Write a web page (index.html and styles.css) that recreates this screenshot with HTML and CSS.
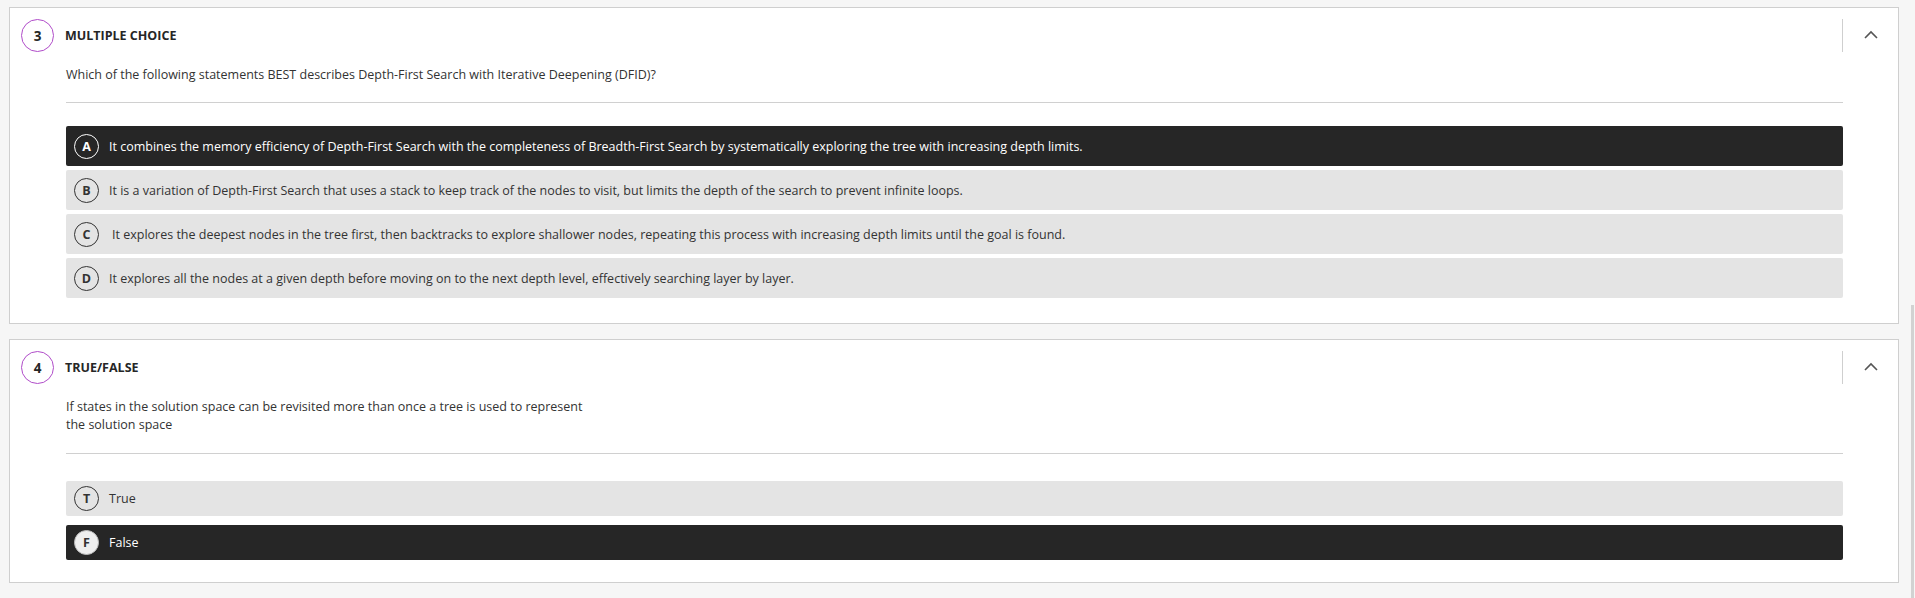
FILE: index.html
```html
<!DOCTYPE html>
<html>
<head>
<meta charset="utf-8">
<link rel="stylesheet" href="styles.css">
</head>
<body>
<div class="page">
  <section class="card card-mc">
    <div class="card-head">
      <div class="qnum">3</div>
      <div class="qtitle">MULTIPLE CHOICE</div>
      <div class="vdiv"></div>
      <div class="chev">
        <svg width="14" height="9" viewBox="0 0 14 9"><polyline points="1,8 7,2 13,8" fill="none" stroke="#555" stroke-width="1.6"/></svg>
      </div>
    </div>
    <div class="card-body">
      <p class="qtext">Which of the following statements BEST describes Depth-First Search with Iterative Deepening (DFID)?</p>
      <hr class="sep">
      <div class="options">
        <div class="opt opt-selected"><span class="letter">A</span><span class="otext">It combines the memory efficiency of Depth-First Search with the completeness of Breadth-First Search by systematically exploring the tree with increasing depth limits.</span></div>
        <div class="opt"><span class="letter">B</span><span class="otext">It is a variation of Depth-First Search that uses a stack to keep track of the nodes to visit, but limits the depth of the search to prevent infinite loops.</span></div>
        <div class="opt"><span class="letter">C</span><span class="otext otext-c">It explores the deepest nodes in the tree first, then backtracks to explore shallower nodes, repeating this process with increasing depth limits until the goal is found.</span></div>
        <div class="opt"><span class="letter">D</span><span class="otext">It explores all the nodes at a given depth before moving on to the next depth level, effectively searching layer by layer.</span></div>
      </div>
    </div>
  </section>

  <section class="card card-tf">
    <div class="card-head">
      <div class="qnum">4</div>
      <div class="qtitle">TRUE/FALSE</div>
      <div class="vdiv"></div>
      <div class="chev">
        <svg width="14" height="9" viewBox="0 0 14 9"><polyline points="1,8 7,2 13,8" fill="none" stroke="#555" stroke-width="1.6"/></svg>
      </div>
    </div>
    <div class="card-body">
      <p class="qtext">If states in the solution space can be revisited more than once a tree is used to represent<br>the solution space</p>
      <hr class="sep">
      <div class="options options-tf">
        <div class="opt opt-tf"><span class="letter">T</span><span class="otext">True</span></div>
        <div class="opt opt-tf opt-selected"><span class="letter letter-filled">F</span><span class="otext">False</span></div>
      </div>
    </div>
  </section>
</div>
<div class="scrollthumb"></div>
</body>
</html>
```

FILE: styles.css
```css
html, body {
  margin: 0;
  padding: 0;
}
body {
  background: #f6f6f6;
  font-family: "Open Sans", "Liberation Sans", sans-serif;
  color: #262626;
  height: 598px;
  overflow: hidden;
}
.page {
  padding: 7px 16px 0 9px;
  display: flex;
  flex-direction: column;
  gap: 15px;
}
.card {
  background: #fff;
  border: 1px solid #cfcfcf;
  padding-top: 11px;
}
.card-mc { padding-bottom: 25px; }
.card-tf { padding-bottom: 22px; }
.card-head {
  display: flex;
  align-items: center;
  height: 33px;
  padding-left: 11px;
}
.qnum {
  width: 31px;
  height: 31px;
  border: 1.5px solid #b04cc9;
  border-radius: 50%;
  display: flex;
  align-items: center;
  justify-content: center;
  font-weight: 700;
  font-size: 13.5px;
  color: #262626;
}
.qtitle {
  flex: 1;
  margin-left: 11px;
  font-weight: 700;
  font-size: 12.5px;
  color: #262626;
}
.vdiv {
  width: 1px;
  height: 33px;
  background: #cfcfcf;
}
.chev {
  width: 55px;
  display: flex;
  justify-content: center;
  align-items: center;
  height: 33px;
  padding-bottom: 2px;
  box-sizing: border-box;
}
.card-body {
  padding: 0 55px 0 56px;
}
.qtext {
  margin: 14px 0 0 0;
  font-size: 12.5px;
  line-height: 18px;
  color: #333;
}
.sep {
  border: 0;
  height: 1px;
  background: #d0d0d0;
  margin: 18px 0 23px 0;
}
.card-tf .sep { margin: 19px 0 27px 0; }
.options {
  display: flex;
  flex-direction: column;
  gap: 4px;
}
.options-tf { gap: 9px; }
.opt {
  display: flex;
  align-items: center;
  height: 40px;
  background: #e4e4e4;
  border-radius: 2px;
  padding-left: 8px;
  color: #333;
}
.opt-tf { height: 35px; }
.opt-selected {
  background: #262626;
  color: #fff;
}
.letter {
  width: 23px;
  height: 23px;
  border: 1.5px solid #333;
  border-radius: 50%;
  display: flex;
  align-items: center;
  justify-content: center;
  font-size: 12.5px;
  font-weight: 700;
  flex-shrink: 0;
}
.opt-selected .letter {
  border-color: #fff;
  color: #fff;
}
.opt-selected .letter-filled {
  background: #efefef;
  border-color: #bbb;
  color: #333;
}
.otext {
  margin-left: 10px;
  font-size: 12.5px;
  white-space: nowrap;
}
.otext-c { margin-left: 13px; }
.scrollthumb {
  position: fixed;
  right: 1px;
  top: 305px;
  width: 3px;
  height: 293px;
  background: #d2d2d2;
}
```
